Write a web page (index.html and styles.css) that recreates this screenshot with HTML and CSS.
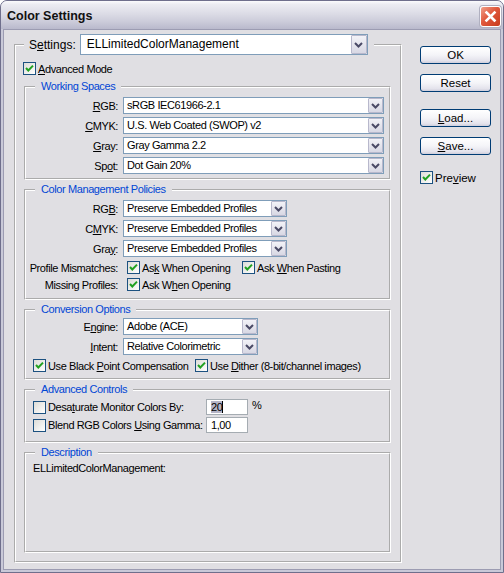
FILE: index.html
```html
<!DOCTYPE html>
<html>
<head>
<meta charset="utf-8">
<title>Color Settings</title>
<link rel="stylesheet" href="styles.css">
</head>
<body>
<div class="window">
  <div class="titlebar">
    <span class="title">Color Settings</span>
    <span class="close"><svg width="19" height="19" viewBox="0 0 19 19"><path d="M5.5 5.5 L13.5 13.5 M13.5 5.5 L5.5 13.5" stroke="#fff" stroke-width="2.6" stroke-linecap="square"/></svg></span>
  </div>
  <div class="client">
    <fieldset class="main">
      <legend class="main-legend">
        <span class="set-label">S<u>e</u>ttings:</span>
        <span class="combo big"><span class="val">ELLimitedColorManagement</span><span class="arrow"><svg width="9" height="6" viewBox="0 0 9 6"><polyline points="1,1 4.5,4.5 8,1" fill="none" stroke="#4a4a66" stroke-width="2"/></svg></span></span>
      </legend>
      <div class="main-body">
        <div class="check adv"><span class="cb on"><svg width="11" height="11" viewBox="0 0 11 11"><polyline points="2,5 4.3,7.5 9,2.6" fill="none" stroke="#21a121" stroke-width="2"/></svg></span><span><u>A</u>dvanced Mode</span></div>

        <fieldset class="group ws">
          <legend>Working Spaces</legend>
          <div class="gbody">
            <div class="row"><span class="lbl"><u>R</u>GB:</span><span class="combo w-ws"><span class="val">sRGB IEC61966-2.1</span><span class="arrow"><svg width="9" height="6" viewBox="0 0 9 6"><polyline points="1,1 4.5,4.5 8,1" fill="none" stroke="#4a4a66" stroke-width="2"/></svg></span></span></div>
            <div class="row"><span class="lbl"><u>C</u>MYK:</span><span class="combo w-ws"><span class="val">U.S. Web Coated (SWOP) v2</span><span class="arrow"><svg width="9" height="6" viewBox="0 0 9 6"><polyline points="1,1 4.5,4.5 8,1" fill="none" stroke="#4a4a66" stroke-width="2"/></svg></span></span></div>
            <div class="row"><span class="lbl"><u>G</u>ray:</span><span class="combo w-ws"><span class="val">Gray Gamma 2.2</span><span class="arrow"><svg width="9" height="6" viewBox="0 0 9 6"><polyline points="1,1 4.5,4.5 8,1" fill="none" stroke="#4a4a66" stroke-width="2"/></svg></span></span></div>
            <div class="row"><span class="lbl">Sp<u>o</u>t:</span><span class="combo w-ws"><span class="val">Dot Gain 20%</span><span class="arrow"><svg width="9" height="6" viewBox="0 0 9 6"><polyline points="1,1 4.5,4.5 8,1" fill="none" stroke="#4a4a66" stroke-width="2"/></svg></span></span></div>
          </div>
        </fieldset>

        <fieldset class="group cmp">
          <legend>Color Management Policies</legend>
          <div class="gbody">
            <div class="row"><span class="lbl">RG<u>B</u>:</span><span class="combo w-cmp"><span class="val">Preserve Embedded Profiles</span><span class="arrow"><svg width="9" height="6" viewBox="0 0 9 6"><polyline points="1,1 4.5,4.5 8,1" fill="none" stroke="#4a4a66" stroke-width="2"/></svg></span></span></div>
            <div class="row"><span class="lbl">C<u>M</u>YK:</span><span class="combo w-cmp"><span class="val">Preserve Embedded Profiles</span><span class="arrow"><svg width="9" height="6" viewBox="0 0 9 6"><polyline points="1,1 4.5,4.5 8,1" fill="none" stroke="#4a4a66" stroke-width="2"/></svg></span></span></div>
            <div class="row"><span class="lbl">Gra<u>y</u>:</span><span class="combo w-cmp"><span class="val">Preserve Embedded Profiles</span><span class="arrow"><svg width="9" height="6" viewBox="0 0 9 6"><polyline points="1,1 4.5,4.5 8,1" fill="none" stroke="#4a4a66" stroke-width="2"/></svg></span></span></div>
            <div class="crow first"><span class="lbl">Profile Mismatches:</span>
              <div class="check w-ask"><span class="cb on"><svg width="11" height="11" viewBox="0 0 11 11"><polyline points="2,5 4.3,7.5 9,2.6" fill="none" stroke="#21a121" stroke-width="2"/></svg></span><span>As<u>k</u> When Opening</span></div>
              <div class="check"><span class="cb on"><svg width="11" height="11" viewBox="0 0 11 11"><polyline points="2,5 4.3,7.5 9,2.6" fill="none" stroke="#21a121" stroke-width="2"/></svg></span><span>Ask <u>W</u>hen Pasting</span></div>
            </div>
            <div class="crow"><span class="lbl">Missing Profiles:</span>
              <div class="check"><span class="cb on"><svg width="11" height="11" viewBox="0 0 11 11"><polyline points="2,5 4.3,7.5 9,2.6" fill="none" stroke="#21a121" stroke-width="2"/></svg></span><span>Ask W<u>h</u>en Opening</span></div>
            </div>
          </div>
        </fieldset>

        <fieldset class="group conv">
          <legend>Conversion Options</legend>
          <div class="gbody">
            <div class="row"><span class="lbl">E<u>n</u>gine:</span><span class="combo w-conv"><span class="val">Adobe (ACE)</span><span class="arrow"><svg width="9" height="6" viewBox="0 0 9 6"><polyline points="1,1 4.5,4.5 8,1" fill="none" stroke="#4a4a66" stroke-width="2"/></svg></span></span></div>
            <div class="row"><span class="lbl"><u>I</u>ntent:</span><span class="combo w-conv"><span class="val">Relative Colorimetric</span><span class="arrow"><svg width="9" height="6" viewBox="0 0 9 6"><polyline points="1,1 4.5,4.5 8,1" fill="none" stroke="#4a4a66" stroke-width="2"/></svg></span></span></div>
            <div class="crow pad">
              <div class="check w-bpc"><span class="cb on"><svg width="11" height="11" viewBox="0 0 11 11"><polyline points="2,5 4.3,7.5 9,2.6" fill="none" stroke="#21a121" stroke-width="2"/></svg></span><span>Use Black <u>P</u>oint Compensation</span></div>
              <div class="check"><span class="cb on"><svg width="11" height="11" viewBox="0 0 11 11"><polyline points="2,5 4.3,7.5 9,2.6" fill="none" stroke="#21a121" stroke-width="2"/></svg></span><span>Use <u>D</u>ither (8-bit/channel images)</span></div>
            </div>
          </div>
        </fieldset>

        <fieldset class="group advc">
          <legend>Advanced Controls</legend>
          <div class="gbody">
            <div class="arow">
              <div class="check w-adv"><span class="cb"></span><span>Desa<u>t</u>urate Monitor Colors By:</span></div>
              <span class="edit"><span class="sel">20</span><span class="caret"></span></span>
              <span class="unit">%</span>
            </div>
            <div class="arow second">
              <div class="check w-adv"><span class="cb"></span><span>Blend RGB Colors <u>U</u>sing Gamma:</span></div>
              <span class="edit">1,00</span>
            </div>
          </div>
        </fieldset>

        <fieldset class="group desc">
          <legend>Description</legend>
          <div class="gbody">
            <p class="desc-text">ELLimitedColorManagement:</p>
          </div>
        </fieldset>
      </div>
    </fieldset>

    <div class="side">
      <div class="btn">OK</div>
      <div class="btn reset">Reset</div>
      <div class="btn load"><span><u>L</u>oad...</span></div>
      <div class="btn save"><span><u>S</u>ave...</span></div>
      <div class="check preview"><span class="cb on"><svg width="11" height="11" viewBox="0 0 11 11"><polyline points="2,5 4.3,7.5 9,2.6" fill="none" stroke="#21a121" stroke-width="2"/></svg></span><span>Pre<u>v</u>iew</span></div>
    </div>
  </div>
</div>
</body>
</html>
```

FILE: styles.css
```css
html, body {
  margin: 0;
  padding: 0;
  background: #ffffff;
}

body {
  font-family: "Liberation Sans", Arial, sans-serif;
  font-size: 11px;
  letter-spacing: -0.4px;
  color: #000;
}

u {
  text-decoration: underline;
  text-underline-offset: 1px;
}

.window {
  width: 504px;
  height: 573px;
  box-sizing: border-box;
  border: 1px solid #6f6f8c;
  border-radius: 7px 7px 0 0;
  background: #c9c9d8;
  display: flex;
  flex-direction: column;
  overflow: hidden;
}

.titlebar {
  height: 28px;
  flex: none;
  display: flex;
  align-items: center;
  justify-content: space-between;
  padding: 0 2px 0 6px;
  background: linear-gradient(#fbfbfd 0%, #ececf2 12%, #dcdce6 45%, #cbcbd9 75%, #b9b9cc 100%);
}

.title {
  font-size: 12.5px;
  font-weight: bold;
  letter-spacing: 0;
  color: #111;
  margin-top: 2px;
}

.close {
  width: 21px;
  height: 21px;
  box-sizing: border-box;
  border: 1px solid #ffffff;
  border-radius: 3px;
  background: linear-gradient(135deg, #f0a08a 0%, #e0583c 45%, #c83a1c 100%);
  display: flex;
  align-items: center;
  justify-content: center;
  margin-top: 2px;
  box-shadow: 0 0 0 1px #b0b0c0;
}

.client {
  flex: 1;
  margin: 0 2px 2px 2px;
  border: 1px solid #9c9cb2;
  background: #e0dfe3;
  display: flex;
  align-items: flex-start;
  padding: 4px 0 0 10px;
}

fieldset {
  margin: 0;
  padding: 0;
  min-width: 0;
  border: 2px groove #ffffff;
}

legend {
  padding: 0;
}

.main {
  width: 388px;
  box-sizing: border-box;
}

.main-legend {
  margin-left: 8px;
  padding: 0 6px 0 5px;
  display: flex;
  align-items: center;
  background: #e0dfe3;
}

.set-label {
  font-size: 12px;
  letter-spacing: 0;
  margin-right: 4px;
}

.main-body {
  padding: 7px 0 8px 0;
}

.combo {
  display: flex;
  height: 17px;
  box-sizing: border-box;
  border: 1px solid #7f9db9;
  background: #ffffff;
}

.combo .val {
  flex: 1;
  padding-left: 3px;
  line-height: 15px;
  white-space: nowrap;
  overflow: hidden;
}

.combo .arrow {
  width: 15px;
  box-sizing: border-box;
  border: 1px solid #b8b8cc;
  border-radius: 1px;
  background: linear-gradient(#f2f2f7, #d8d8e4);
  display: flex;
  align-items: center;
  justify-content: center;
  margin: 0;
}

.combo.big {
  width: 288px;
  height: 21px;
}

.combo.big .val {
  font-size: 12px;
  letter-spacing: 0;
  line-height: 19px;
  padding-left: 6px;
}

.combo.big .arrow {
  width: 16px;
}

.w-ws { width: 261px; }
.w-cmp { width: 164px; }
.w-conv { width: 135px; }

.check {
  display: flex;
  align-items: center;
  gap: 2px;
  height: 13px;
  white-space: nowrap;
}

.cb {
  width: 13px;
  height: 13px;
  box-sizing: border-box;
  border: 1px solid #1c5180;
  background: linear-gradient(135deg, #dcdcd7, #ffffff);
  display: inline-flex;
  align-items: center;
  justify-content: center;
  flex: none;
}

.adv {
  margin-left: 7px;
}

.group {
  margin: 3px 9px 0 8px;
}

.group.ws {
  margin-top: 5px;
}

.group legend {
  margin-left: 9px;
  padding: 0 6px;
  color: #0046d5;
  line-height: 13px;
}

.gbody {
  padding: 4px 0 4px 0;
}

.row {
  display: flex;
  align-items: center;
  height: 17px;
}

.row + .row {
  margin-top: 3px;
}

.lbl {
  width: 92px;
  text-align: right;
  margin-right: 5px;
  white-space: nowrap;
  flex: none;
}

.cmp .gbody {
  padding-bottom: 7px;
}

.crow {
  display: flex;
  align-items: center;
  height: 13px;
  margin-top: 4px;
}

.crow .lbl {
  margin-right: 9px;
}

.w-ask { width: 115px; }

.conv .gbody {
  padding: 2px 0 6px 0;
}

.crow.pad {
  padding-left: 7px;
}

.w-bpc { width: 162px; }

.advc .gbody {
  padding: 3px 0 8px 7px;
}

.arow {
  display: flex;
  align-items: center;
  height: 16px;
}

.arow.second {
  margin-top: 2px;
}

.w-adv { width: 173px; }

.edit {
  width: 42px;
  height: 16px;
  box-sizing: border-box;
  border: 1px solid #a5acb2;
  background: #ffffff;
  padding-left: 4px;
  line-height: 14px;
  display: flex;
  align-items: center;
}

.sel {
  background: #b4b4c6;
  line-height: 12px;
}

.caret {
  width: 1px;
  height: 12px;
  background: #000;
}

.unit {
  margin-left: 4px;
  align-self: flex-start;
}

.desc .gbody {
  height: 92px;
  box-sizing: border-box;
  padding: 3px 0 0 7px;
}

.desc-text {
  margin: 0;
  line-height: 13px;
}

.side {
  margin-left: 18px;
  padding-top: 12px;
  display: flex;
  flex-direction: column;
  width: 71px;
}

.btn {
  width: 71px;
  height: 18px;
  box-sizing: border-box;
  border: 1px solid #003c74;
  border-radius: 3px;
  background: linear-gradient(#ffffff 0%, #f4f4f8 50%, #e4e3ec 85%, #cfcedb 100%);
  display: flex;
  align-items: center;
  justify-content: center;
  font-size: 11.5px;
  letter-spacing: 0;
}

.btn.reset { margin-top: 10px; }
.btn.load { margin-top: 17px; }
.btn.save { margin-top: 10px; }

.preview {
  margin-top: 16px;
  font-size: 11.5px;
  letter-spacing: 0;
}
```
